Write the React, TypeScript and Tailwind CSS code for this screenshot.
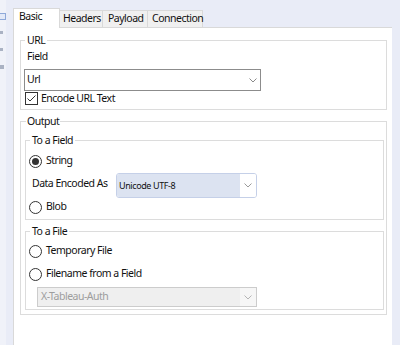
import React from "react";

function Chevron({ color = "#8a8a8a" }: { color?: string }) {
  return (
    <svg width="8" height="5" viewBox="0 0 8 5" fill="none">
      <path d="M0.5 0.5 L4 4 L7.5 0.5" stroke={color} strokeWidth="1" />
    </svg>
  );
}

function Radio({ checked }: { checked?: boolean }) {
  return (
    <span className="w-[13px] h-[13px] rounded-full border border-[#333333] bg-white flex items-center justify-center shrink-0">
      {checked && <span className="w-[7px] h-[7px] rounded-full bg-[#333333]" />}
    </span>
  );
}

function Checkbox() {
  return (
    <span className="w-[13px] h-[13px] border border-[#333333] bg-white flex items-center justify-center shrink-0">
      <svg width="11" height="11" viewBox="0 0 11 11" fill="none">
        <path d="M1.5 5.5 L4 8 L9.5 2.5" stroke="#333333" strokeWidth="1" />
      </svg>
    </span>
  );
}

export default function App() {
  return (
    <div className="w-[400px] h-[345px] bg-[#e9ecf7] flex overflow-hidden font-['Noto_Sans',sans-serif] text-[10.5px] tracking-[-0.5px] text-[#111111]">
      <div className="w-[13px] shrink-0 flex">
        <div className="w-[6px] bg-[#f0f2f9] flex flex-col items-start pt-[13px]">
          <div className="w-[6px] h-[7px] border border-l-0 border-[#8fa9d9] bg-[#e3e9f7]" />
          <div className="mt-[11px] w-[3px] h-[3px] bg-[#aab2c3]" />
          <div className="mt-[14px] w-[3px] h-[3px] bg-[#aab2c3]" />
          <div className="mt-[14px] w-[4px] h-[4px] bg-[#aab2c3]" />
        </div>
      </div>
      <div className="w-[379px] shrink-0 flex flex-col">
        <div className="h-[27px] flex items-end">
          <div className="relative z-10 -mb-px h-[20px] w-[47px] bg-white border border-b-0 border-[#d9d9d9] flex items-center pl-[5px] pb-[3px]">
            Basic
          </div>
          <div className="h-[17px] w-[43px] bg-[#f0f0f0] border-t border-r border-[#d9d9d9] flex items-center pl-[3px]">
            Headers
          </div>
          <div className="h-[17px] w-[45px] bg-[#f0f0f0] border-t border-r border-[#d9d9d9] flex items-center pl-[5px]">
            Payload
          </div>
          <div className="h-[17px] w-[55px] bg-[#f0f0f0] border-t border-r border-[#d9d9d9] flex items-center pl-[4px]">
            Connection
          </div>
        </div>
        <div className="flex-1 bg-white border-l border-t border-[#d9d9d9] pl-[6px] pr-[5px] pt-[4px]">
          {/* URL group */}
          <div className="mt-[8px] border border-[#dcdcdc] px-[3px] pb-[4px]">
            <div className="-mt-[9px] ml-[1px] px-[2px] w-fit bg-white leading-[16px]">URL</div>
            <div className="ml-[3px] leading-[16px]">Field</div>
            <div className="mt-[5px] w-[237px] h-[22px] border border-[#8c8c8c] bg-white flex items-center justify-between pl-[2px] pr-[3px]">
              <span>Url</span>
              <Chevron />
            </div>
            <div className="mt-[1px] h-[13px] flex items-center ml-[1px] gap-[3px]">
              <Checkbox />
              <span>Encode URL Text</span>
            </div>
          </div>

          {/* Output group */}
          <div className="mt-[11px] border border-[#dcdcdc] pl-[4px] pr-[2px] pb-[4px]">
            <div className="-mt-[9px] ml-[1px] px-[1px] w-fit bg-white leading-[16px]">Output</div>

            <div className="mt-[11px] border border-[#dcdcdc] px-[3px] pb-[4px]">
              <div className="-mt-[9px] ml-[1px] px-[2px] w-fit bg-white leading-[16px]">To a Field</div>
              <div className="mt-[5px] h-[16px] flex items-center gap-[4px]">
                <Radio checked />
                <span>String</span>
              </div>
              <div className="mt-[4px] h-[25px] flex items-start">
                <span className="w-[87px] pl-[3px] mt-[2px] leading-[16px]">Data Encoded As</span>
                <div className="w-[141px] h-[25px] rounded-[3px] border border-[#c5d0e8] flex overflow-hidden">
                  <div className="flex-1 bg-[#dce3f1] flex items-center pl-[2px] text-[9px] tracking-[-0.4px] text-[#111111]">
                    Unicode UTF-8
                  </div>
                  <div className="w-[16px] bg-white flex items-center justify-center">
                    <Chevron color="#9a9a9a" />
                  </div>
                </div>
              </div>
              <div className="mt-[1px] h-[16px] flex items-center gap-[4px]">
                <Radio />
                <span>Blob</span>
              </div>
            </div>

            <div className="mt-[11px] border border-[#dcdcdc] px-[3px] pb-[2px]">
              <div className="-mt-[9px] ml-[1px] px-[2px] w-fit bg-white leading-[16px]">To a File</div>
              <div className="mt-[4px] h-[16px] flex items-center gap-[4px]">
                <Radio />
                <span>Temporary File</span>
              </div>
              <div className="mt-[7px] h-[16px] flex items-center gap-[4px]">
                <Radio />
                <span>Filename from a Field</span>
              </div>
              <div className="mt-[5px] ml-[8px] w-[220px] h-[20px] border border-[#cccccc] flex">
                <div className="flex-1 bg-[#efefef] flex items-center pl-[3px] text-[#9d9d9d]">
                  X-Tableau-Auth
                </div>
                <div className="w-[16px] bg-[#f6f6f6] flex items-center justify-center">
                  <Chevron color="#b5b5b5" />
                </div>
              </div>
            </div>
          </div>
        </div>
      </div>
    </div>
  );
}
